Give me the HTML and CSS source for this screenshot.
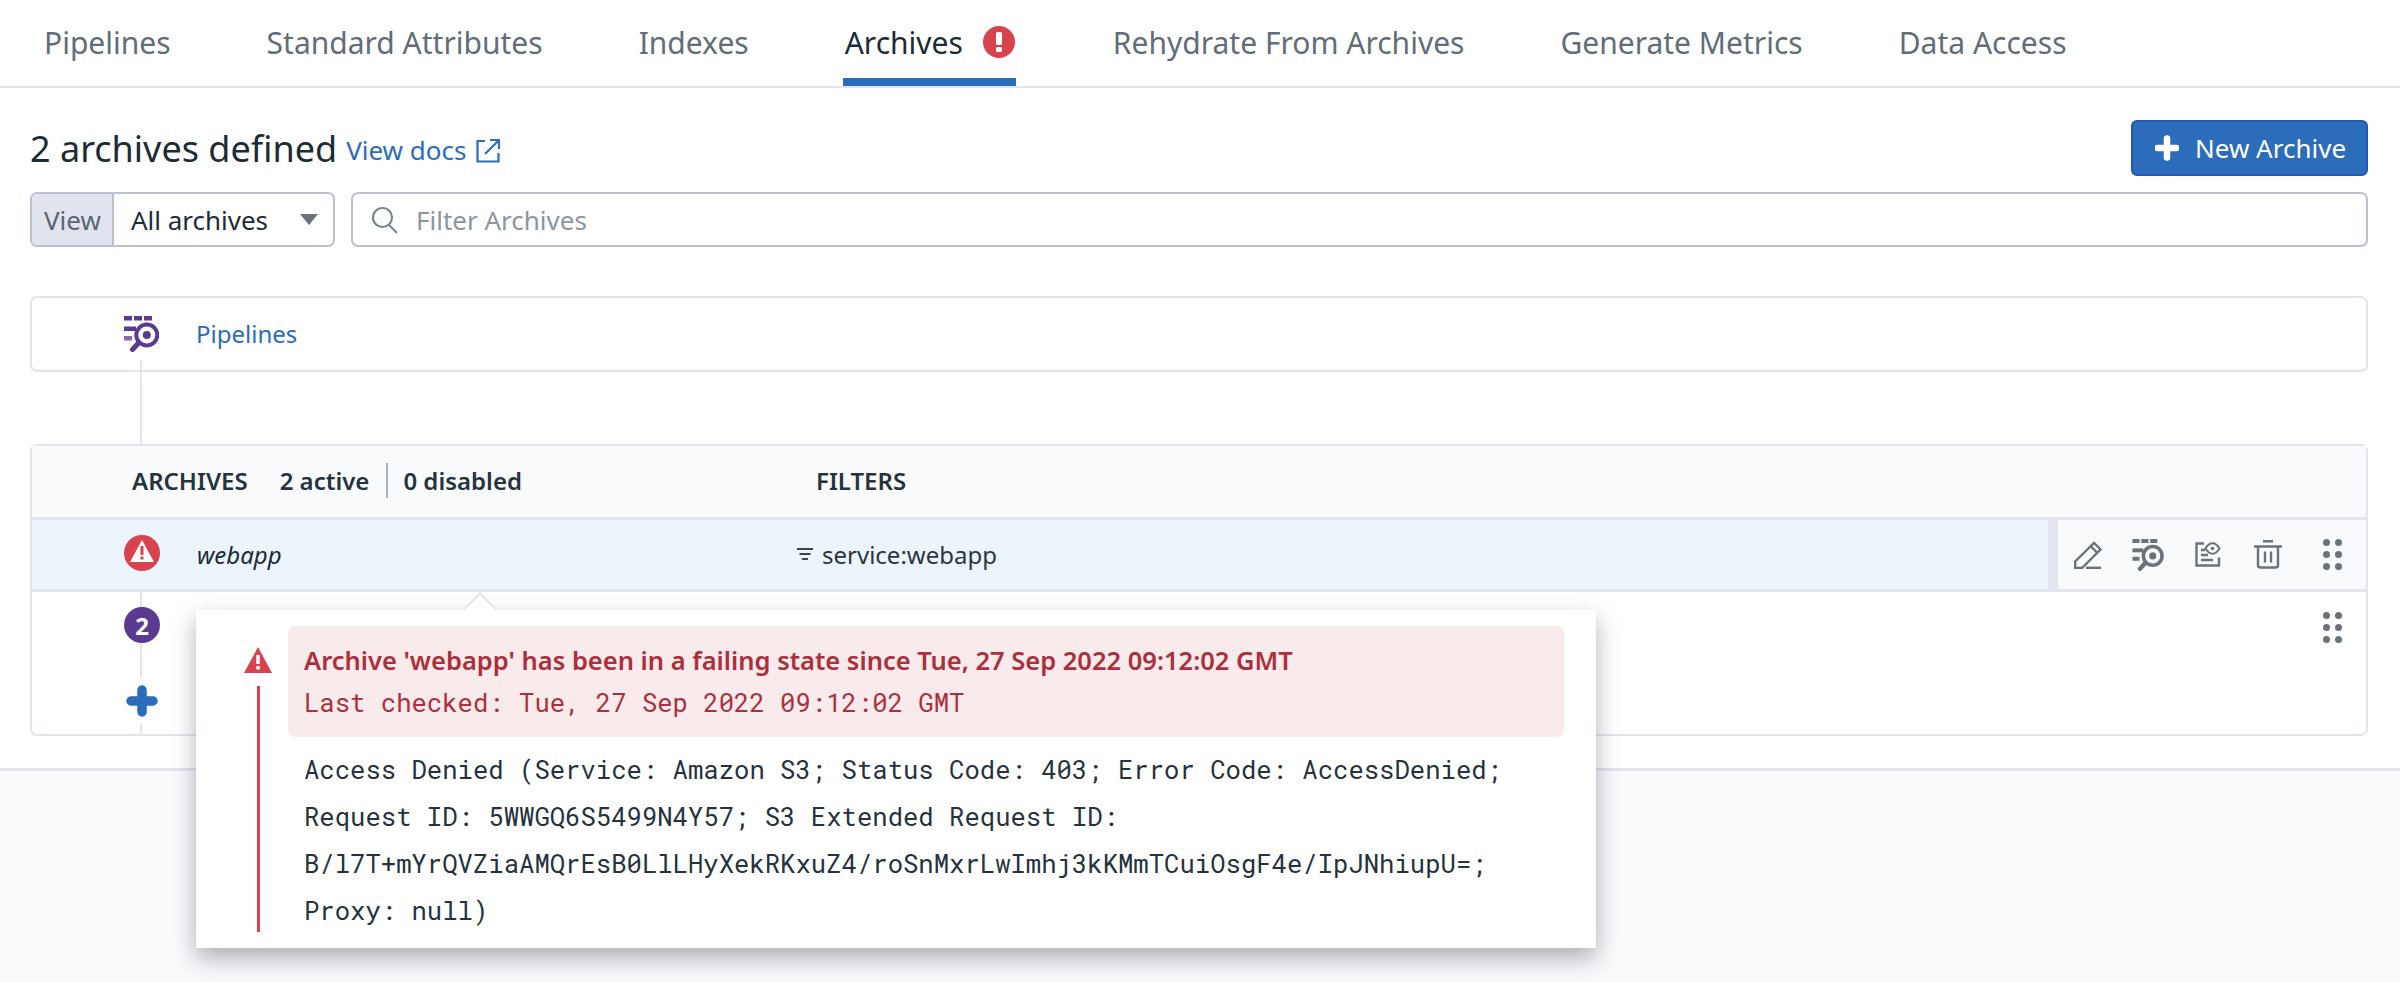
FILE: index.html
```html
<!DOCTYPE html>
<html lang="en">
<head>
    <meta charset="UTF-8">
    <title>Archives</title>
    <link rel="stylesheet" href="styles.css">
</head>
<body>
    <nav class="tabs">
        <a class="tab">Pipelines</a>
        <a class="tab">Standard Attributes</a>
        <a class="tab">Indexes</a>
        <a class="tab tab-active">Archives
            <svg width="32" height="32" viewBox="0 0 32 32"><circle cx="16" cy="16" r="16" fill="#d9434e"/><rect x="13" y="6" width="6" height="13" rx="1.5" fill="#fff"/><rect x="13" y="21" width="6" height="5" rx="1.5" fill="#fff"/></svg>
        </a>
        <a class="tab">Rehydrate From Archives</a>
        <a class="tab">Generate Metrics</a>
        <a class="tab">Data Access</a>
    </nav>

    <main class="content">
        <div class="title-row">
            <h1 class="title">2 archives defined</h1>
            <a class="docs-link">View docs
                <svg width="24" height="25" viewBox="0 0 24 25" fill="none" stroke="#2b6cbb" stroke-width="2.2"><path d="M9 3H1.500v20.500h21V15"/><path d="M9 16 22 3"/><path d="M14 2h9v9"/></svg>
            </a>
            <button class="new-button">
                <svg width="24" height="26" viewBox="0 0 24 26"><path d="M12 3.500v19M2.500 13h19" stroke="#fff" stroke-width="6.500" stroke-linecap="round"/></svg>
                New Archive
            </button>
        </div>

        <div class="filter-row">
            <div class="view-select">
                <span class="view-label">View</span>
                <span class="view-value">All archives</span>
                <span class="caret"></span>
            </div>
            <div class="search">
                <svg width="28" height="28" viewBox="0 0 28 28" fill="none" stroke="#7b8690" stroke-width="2.200"><circle cx="11.500" cy="11.500" r="9.500"/><path d="M18 19 26 27"/></svg>
                <span>Filter Archives</span>
            </div>
        </div>

        <section class="pipeline-card">
            <svg width="35" height="36" viewBox="0 0 35 36">
                <g fill="#5b3a92"><rect width="8" height="4.500"/><rect x="10" width="8" height="4.500"/><rect x="20" width="8" height="4.500"/><rect y="10.500" width="12" height="4.500"/><rect y="20" width="8" height="4.500" opacity="0.75"/><circle cx="22.800" cy="19" r="4"/></g>
                <circle cx="22.800" cy="19" r="10.500" fill="none" stroke="#5b3a92" stroke-width="4"/>
                <path d="M14.500 27 8.500 33.500" stroke="#5b3a92" stroke-width="5" stroke-linecap="round"/>
            </svg>
            <a class="pipeline-link">Pipelines</a>
        </section>

        <div class="connector"></div>

        <section class="archive-table">
            <div class="table-head">
                <span>ARCHIVES</span>
                <span class="head-count">2 active</span>
                <span class="head-count head-split">0 disabled</span>
                <span class="head-filters">FILTERS</span>
            </div>
            <div class="archive-row row-hover">
                <span class="row-badge badge-error">
                    <svg width="24" height="22" viewBox="0 0 24 22"><path d="M12 0 24 22H0Z" fill="#fff"/><rect x="10.500" y="6" width="3" height="9" fill="#d9434e"/><rect x="10.500" y="16.500" width="3" height="3" fill="#d9434e"/></svg>
                </span>
                <span class="row-name">webapp</span>
                <span class="row-filter">
                    <svg width="16" height="13" viewBox="0 0 16 13" fill="#3c4650"><rect width="16" height="2"/><rect x="2.500" y="5" width="11" height="2"/><rect x="5" y="10" width="6" height="2"/></svg>
                    service:webapp
                </span>
                <div class="row-actions">
                    <span class="action-icon">
                        <svg width="29" height="28" viewBox="0 0 29 28" fill="none" stroke="#6a737c" stroke-width="2.400"><path d="M1.200 27v-6.500L20 2l6.500 6.500L8 27Z"/><path d="M17 5.500l6 6"/><path d="M12 26.800h15"/></svg>
                    </span>
                    <span class="action-icon">
                        <svg width="32" height="32" viewBox="0 0 35 36"><g fill="#6a737c"><rect width="8" height="4.500"/><rect x="10" width="8" height="4.500"/><rect x="20" width="8" height="4.500"/><rect y="10.500" width="12" height="4.500"/><rect y="20" width="8" height="4.500"/><circle cx="22.800" cy="19" r="4"/></g><circle cx="22.800" cy="19" r="10.500" fill="none" stroke="#6a737c" stroke-width="4"/><path d="M14.500 27 8.500 33.500" stroke="#6a737c" stroke-width="5" stroke-linecap="round"/></svg>
                    </span>
                    <span class="action-icon">
                        <svg width="26" height="25" viewBox="0 0 26 25" fill="none" stroke="#6a737c" stroke-width="2.400"><path d="M9 1.500H1.500v22H24V15.500"/><path d="M6 8h4M6 13h7M6 18h12"/><path d="M10.500 6.500c2-3.500 4.500-5.200 7-5.200s5 1.700 7 5.200c-2 3.500-4.500 5.200-7 5.200s-5-1.700-7-5.200Z" stroke-width="2"/><circle cx="17.500" cy="6.500" r="1.800" fill="#6a737c" stroke="none"/></svg>
                    </span>
                    <span class="action-icon">
                        <svg width="28" height="29" viewBox="0 0 28 29" fill="none" stroke="#6a737c" stroke-width="2.400"><path d="M9 1.200h10M0 6.500h28"/><path d="M4 6.500V25a2.500 2.500 0 0 0 2.500 2.500h15A2.500 2.500 0 0 0 24 25V6.500"/><path d="M11 11.500v11M17 11.500v11"/></svg>
                    </span>
                    <span class="drag-dots"><i></i><i></i><i></i><i></i><i></i><i></i></span>
                </div>
            </div>
            <div class="archive-row row-plain">
                <span class="row-badge badge-count">2</span>
                <span class="drag-dots row-drag"><i></i><i></i><i></i><i></i><i></i><i></i></span>
            </div>
            <div class="add-row">
                <svg width="32" height="46" viewBox="0 0 32 46"><path d="M16 12v22M5 23h22" stroke="#2b6cbb" stroke-width="9.500" stroke-linecap="round"/></svg>
            </div>
        </section>
    </main>

    <footer class="page-foot"></footer>

    <div class="popover">
        <div class="popover-arrow"></div>
        <div class="popover-side">
            <svg width="28" height="28" viewBox="0 0 28 28"><path d="M14 1 28 27H0Z" fill="#d9434e"/><rect x="12.300" y="9" width="3.500" height="9" fill="#fff"/><rect x="12.300" y="20" width="3.500" height="3.500" fill="#fff"/></svg>
            <span class="side-line"></span>
        </div>
        <div class="popover-body">
            <div class="error-box">
                <div class="error-title">Archive 'webapp' has been in a failing state since Tue, 27 Sep 2022 09:12:02 GMT</div>
                <div class="error-checked">Last checked: Tue, 27 Sep 2022 09:12:02 GMT</div>
            </div>
            <p class="error-detail">Access Denied (Service: Amazon S3; Status Code: 403; Error Code: AccessDenied; Request ID: 5WWGQ6S5499N4Y57; S3 Extended Request ID: B/l7T+mYrQVZiaAMQrEsB0LlLHyXekRKxuZ4/roSnMxrLwImhj3kKMmTCuiOsgF4e/IpJNhiupU=; Proxy: null)</p>
        </div>
    </div>
</body>
</html>
```

FILE: styles.css
```css
html, body {
    height: 100%;
}
body {
    margin: 0;
    display: flex;
    flex-direction: column;
    font-family: "Noto Sans", sans-serif;
    color: #2c3640;
    background-color: #fff;
    overflow: hidden;
}
svg {
    display: block;
    flex: none;
}

/* tabs */
.tabs {
    display: flex;
    gap: 96px;
    height: 86px;
    padding-left: 44px;
    border-bottom: 2px solid #e2e5ed;
}
.tab {
    display: flex;
    align-items: center;
    gap: 20px;
    padding-bottom: 2px;
    box-sizing: border-box;
    font-size: 30px;
    color: #626d78;
}
.tab-active {
    color: #1c2b34;
    margin: 0 1px 0 -2px;
    padding: 0 1px 2px 2px;
    box-shadow: inset 0 -8px 0 #2b6cbb;
}

/* content */
.content {
    padding: 32px 32px 32px 30px;
    border-bottom: 3px solid #e2e5ed;
}
.title-row {
    display: flex;
    align-items: center;
    height: 56px;
}
.title {
    margin: 0;
    font-size: 36px;
    font-weight: 400;
    color: #1c2b34;
}
.docs-link {
    display: flex;
    align-items: center;
    gap: 10px;
    margin-left: 9px;
    padding-top: 4px;
    font-size: 26px;
    color: #2b6cbb;
}
.new-button {
    display: flex;
    align-items: center;
    gap: 16px;
    margin-left: auto;
    width: 237px;
    height: 56px;
    padding: 0 0 0 22px;
    border: 2px solid #2457b0;
    border-radius: 6px;
    background-color: #2b6cbb;
    color: #fff;
    font-family: inherit;
    font-size: 26px;
}

.filter-row {
    display: flex;
    gap: 16px;
    margin-top: 16px;
}
.view-select {
    display: flex;
    align-items: center;
    width: 305px;
    height: 55px;
    box-sizing: border-box;
    border: 2px solid #bcc0d0;
    border-radius: 7px;
    font-size: 26px;
}
.view-label {
    display: flex;
    align-items: center;
    height: 100%;
    padding: 0 11px 0 12px;
    border-right: 2px solid #bcc0d0;
    background-color: #e1e4ee;
    color: #5b6670;
    border-radius: 5px 0 0 5px;
}
.view-value {
    margin-left: 17px;
    color: #1c2b34;
}
.caret {
    margin-left: auto;
    margin-right: 15px;
    border-top: 11px solid #6a737c;
    border-left: 9px solid transparent;
    border-right: 9px solid transparent;
}
.search {
    flex: 1;
    display: flex;
    align-items: center;
    gap: 17px;
    height: 55px;
    box-sizing: border-box;
    padding-left: 18px;
    border: 2px solid #bcc0d0;
    border-radius: 7px;
    font-size: 26px;
    color: #8d969f;
}

/* pipeline row */
.pipeline-card {
    display: flex;
    align-items: center;
    height: 76px;
    box-sizing: border-box;
    margin-top: 49px;
    padding-left: 92px;
    border: 2px solid #e2e5ed;
    border-radius: 7px;
}
.pipeline-link {
    margin-left: 37px;
    padding-bottom: 2px;
    font-size: 24px;
    color: #2b6cbb;
}
.connector {
    width: 2px;
    height: 84px;
    margin: -12px 0 0 110px;
    background-color: #e2e5ed;
}

/* table */
.archive-table {
    position: relative;
    border: 2px solid #e2e5ed;
    border-radius: 7px;
    font-size: 24px;
}
.archive-table::before {
    content: "";
    position: absolute;
    top: 72px;
    bottom: 0;
    left: 108px;
    width: 2px;
    background-color: #e2e5ed;
}
.table-head {
    display: flex;
    align-items: center;
    height: 69px;
    padding: 0 0 2px 100px;
    background-color: #f9fafc;
    border-bottom: 3px solid #e2e5ed;
    font-weight: 600;
    font-size: 24px;
    color: #26323c;
}
.head-count {
    margin-left: 32px;
}
.head-split {
    margin-left: 17px;
    padding-left: 15px;
    border-left: 2px solid #aab2c2;
    line-height: 35px;
}
.head-filters {
    position: absolute;
    left: 784px;
}
.archive-row {
    position: relative;
    display: flex;
    align-items: center;
    height: 69px;
    padding-left: 92px;
    border-bottom: 3px solid #e2e5ed;
}
.row-hover {
    background-color: #ecf5fc;
}
.row-plain {
    border-bottom: none;
    height: 62px;
    align-items: flex-start;
    padding-top: 15px;
    box-sizing: border-box;
}
.row-badge {
    position: relative;
    display: flex;
    align-items: center;
    justify-content: center;
    width: 36px;
    height: 36px;
    border-radius: 50%;
    color: #fff;
    font-weight: 700;
    font-size: 24px;
}
.badge-error {
    margin-top: -4px;
    background-color: #d9434e;
}
.badge-error svg {
    margin-top: -3px;
}
.badge-count {
    background-color: #5b3a92;
}
.row-name {
    margin-left: 37px;
    font-style: italic;
    color: #1c2b34;
}
.row-filter {
    position: absolute;
    left: 765px;
    display: flex;
    align-items: center;
    gap: 9px;
    color: #2c3640;
}
.row-actions {
    position: absolute;
    top: 0;
    right: 0;
    bottom: 0;
    display: flex;
    align-items: center;
    padding-right: 24px;
    background-color: #f9fafc;
    border-left: 10px solid #e2e5ed;
}
.action-icon {
    display: flex;
    justify-content: center;
    width: 60px;
}
.drag-dots {
    display: grid;
    grid-template-columns: 7px 7px;
    gap: 5px;
    margin-left: 25px;
}
.drag-dots i {
    width: 7px;
    height: 7px;
    border-radius: 50%;
    background-color: #6a737c;
}
.row-drag {
    position: absolute;
    top: 20px;
    right: 24px;
}
.add-row {
    position: relative;
    height: 80px;
    padding: 24px 0 0 94px;
    box-sizing: border-box;
}
.add-row svg {
    background-color: #fff;
}

.page-foot {
    flex: 1;
    background-color: #f9fafc;
}

/* error popover */
.popover {
    position: absolute;
    top: 610px;
    left: 196px;
    display: flex;
    width: 1400px;
    height: 338px;
    box-sizing: border-box;
    padding: 16px 32px 16px 48px;
    background-color: #fff;
    box-shadow: 0 10px 22px rgba(30, 35, 50, 0.35);
}
.popover-arrow {
    position: absolute;
    top: -13px;
    left: 272px;
    width: 24px;
    height: 24px;
    background-color: #fff;
    border-top: 2px solid #e2e5ed;
    border-left: 2px solid #e2e5ed;
    box-sizing: border-box;
    transform: rotate(45deg);
}
.popover-side {
    display: flex;
    flex-direction: column;
    align-items: center;
    width: 28px;
    padding-top: 20px;
}
.side-line {
    flex: 1;
    width: 3px;
    margin-top: 12px;
    background-color: #d9434e;
}
.popover-body {
    flex: 1;
    margin-left: 16px;
}
.error-box {
    height: 111px;
    box-sizing: border-box;
    padding: 16px 16px;
    border-radius: 7px;
    background-color: #f9eaeb;
    color: #ac2f3c;
}
.error-title {
    font-size: 25.500px;
    font-weight: 600;
    line-height: 36px;
}
.error-checked {
    margin-top: 8px;
    font-family: "Roboto Mono", "DejaVu Sans Mono", monospace;
    font-size: 25.600px;
    line-height: 32px;
}
.error-detail {
    margin: 9px 0 0;
    padding: 0 16px;
    font-family: "Roboto Mono", "DejaVu Sans Mono", monospace;
    font-size: 25.600px;
    line-height: 47px;
    color: #26323c;
    word-break: break-word;
}
```
